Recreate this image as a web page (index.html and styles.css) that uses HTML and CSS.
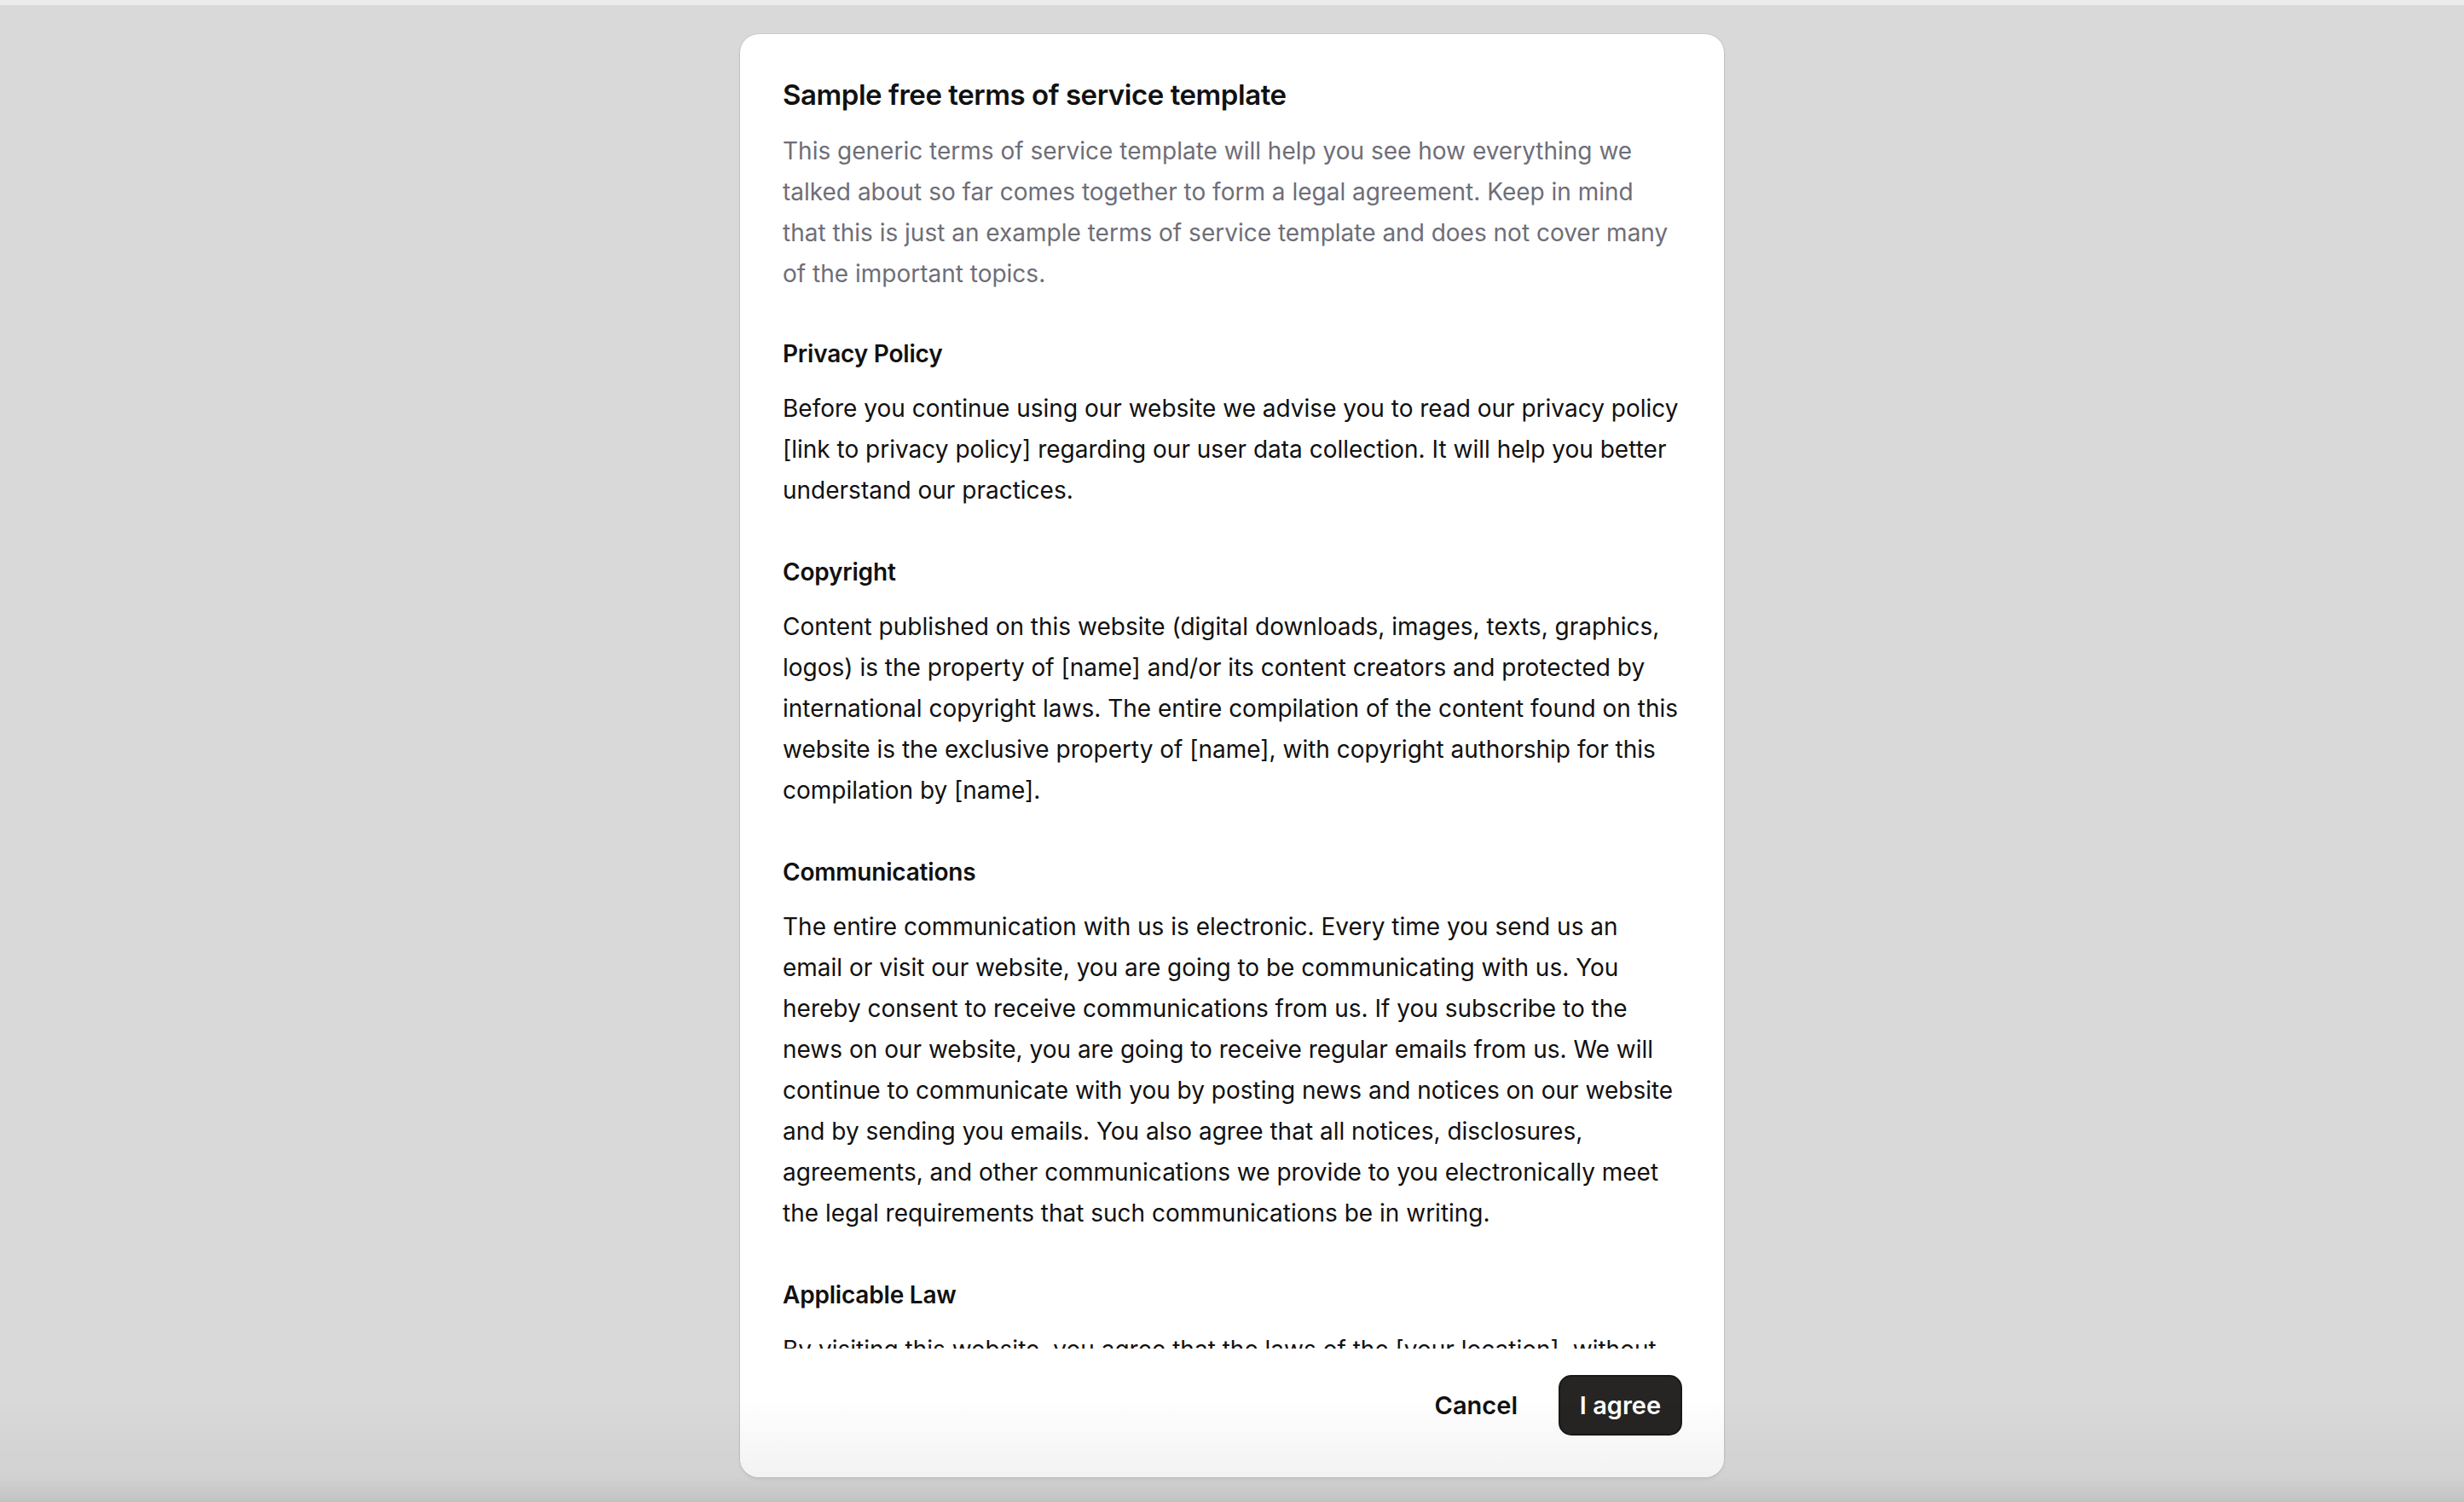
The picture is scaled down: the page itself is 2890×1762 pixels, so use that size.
FILE: index.html
```html
<!DOCTYPE html>
<html lang="en">
<head>
<meta charset="utf-8">
<title>Terms of service</title>
<link rel="stylesheet" href="styles.css">
</head>
<body>
<div class="topbar"></div>
<main class="stage">
  <section class="modal" role="dialog" aria-labelledby="tos-title">
    <div class="modal-body">
      <h1 id="tos-title" class="modal-title">Sample free terms of service template</h1>
      <p class="lead">This generic terms of service template will help you see how everything we talked about so far comes together to form a legal agreement. Keep in mind that this is just an example terms of service template and does not cover many of the important topics.</p>

      <h2 class="section-title">Privacy Policy</h2>
      <p class="section-text">Before you continue using our website we advise you to read our privacy policy [link to privacy policy] regarding our user data collection. It will help you better understand our practices.</p>

      <h2 class="section-title">Copyright</h2>
      <p class="section-text">Content published on this website (digital downloads, images, texts, graphics, logos) is the property of [name] and/or its content creators and protected by international copyright laws. The entire compilation of the content found on this website is the exclusive property of [name], with copyright authorship for this compilation by [name].</p>

      <h2 class="section-title">Communications</h2>
      <p class="section-text">The entire communication with us is electronic. Every time you send us an email or visit our website, you are going to be communicating with us. You hereby consent to receive communications from us. If you subscribe to the news on our website, you are going to receive regular emails from us. We will continue to communicate with you by posting news and notices on our website and by sending you emails. You also agree that all notices, disclosures, agreements, and other communications we provide to you electronically meet the legal requirements that such communications be in writing.</p>

      <h2 class="section-title">Applicable Law</h2>
      <p class="section-text">By visiting this website, you agree that the laws of the [your location], without regard to principles of conflict laws, will govern these terms of service, or any dispute of any sort that might come between [name] and you, or its business partners and associates.</p>
    </div>
    <footer class="modal-footer">
      <button class="btn btn-ghost" type="button">Cancel</button>
      <button class="btn btn-primary" type="button">I agree</button>
    </footer>
  </section>
</main>
</body>
</html>
```

FILE: styles.css
```css
* { box-sizing: border-box; }

html, body {
  margin: 0;
  padding: 0;
  height: 100%;
}

body {
  background: #d9d9d9;
  font-family: "Inter", "Noto Sans", "Liberation Sans", sans-serif;
  color: #111111;
  overflow: hidden;
  position: relative;
}

body::after {
  content: "";
  position: fixed;
  left: 0;
  right: 0;
  bottom: 0;
  height: 122px;
  pointer-events: none;
  background: linear-gradient(to bottom, rgba(0,0,0,0) 0%, rgba(0,0,0,0.03) 75%, rgba(0,0,0,0.1) 100%);
}

.topbar {
  height: 6px;
  background: #e9ebed;
}

.stage {
  display: flex;
  justify-content: center;
  padding-top: 34px;
}

.modal {
  width: 1154px;
  height: 1693px;
  background: #ffffff;
  border-radius: 22px;
  box-shadow: 0 0 0 1px rgba(0,0,0,0.06), 0 2px 4px rgba(0,0,0,0.08);
  display: flex;
  flex-direction: column;
  overflow: hidden;
}

.modal-body {
  flex: 1;
  min-height: 0;
  overflow: hidden;
  padding: 49px 50px 0 50px;
}

.modal-title {
  margin: 0;
  font-size: 33px;
  line-height: 44px;
  font-weight: 600;
  color: #111111;
  letter-spacing: -0.45px;
}

.lead {
  margin: 20px 0 0;
  font-size: 28px;
  line-height: 48px;
  color: #6e6e78;
  letter-spacing: 0;
}

.section-title {
  margin: 48px 0 0;
  font-size: 28px;
  line-height: 48px;
  font-weight: 600;
  color: #111111;
  letter-spacing: -0.2px;
}

.lead + .section-title {
  margin-top: 46px;
}

.section-text {
  margin: 16px 0 0;
  font-size: 28px;
  line-height: 48px;
  color: #111111;
  letter-spacing: 0;
}

.modal-footer {
  flex: none;
  display: flex;
  justify-content: flex-end;
  align-items: center;
  gap: 22px;
  padding: 31px 49px 49px;
  background: linear-gradient(to bottom, #ffffff 0%, #ffffff 40%, #fafafa 100%);
}

.btn {
  font-family: "Inter", "Noto Sans", "Liberation Sans", sans-serif;
  font-size: 29px;
  font-weight: 600;
  height: 71px;
  padding: 0 26px;
  border-radius: 15px;
  cursor: pointer;
}

.btn-ghost {
  background: transparent;
  border: none;
  color: #111111;
}

.btn-primary {
  background: #262523;
  color: #ffffff;
  border: 2px solid #1a1918;
  width: 145px;
  padding: 0;
}
```
